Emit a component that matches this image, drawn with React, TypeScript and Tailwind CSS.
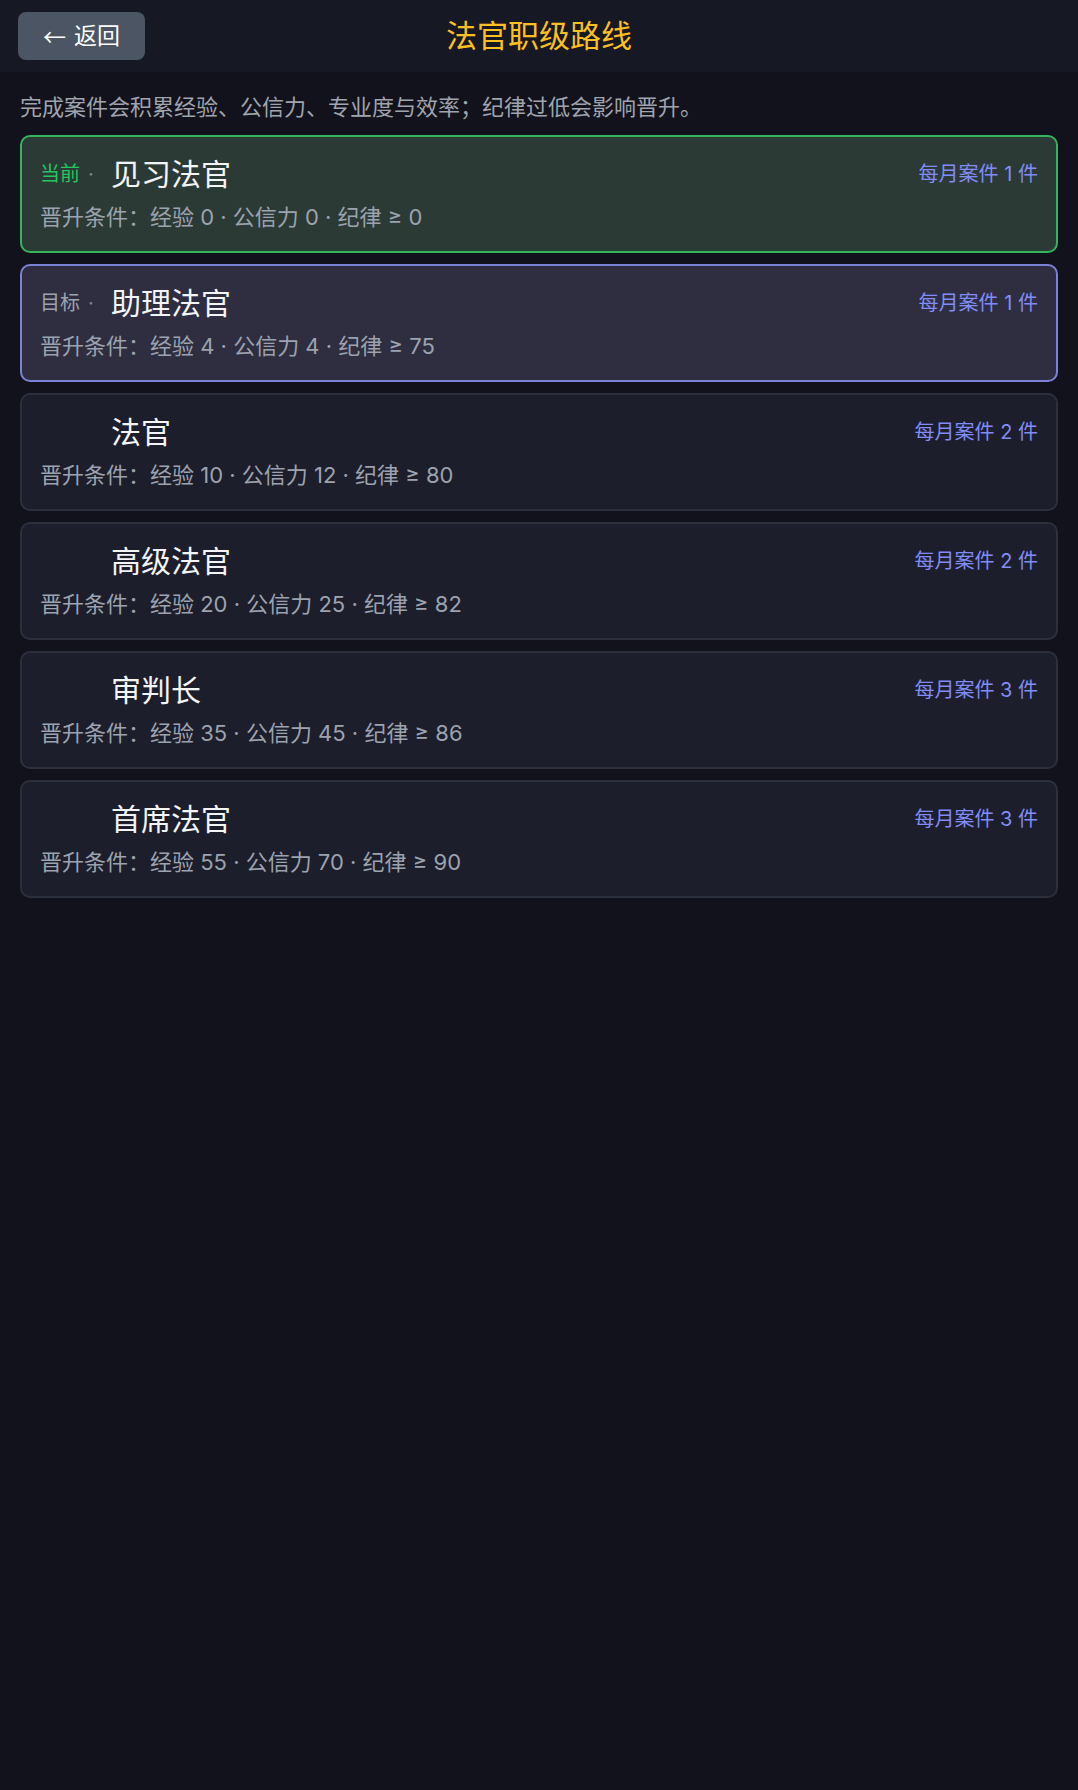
type Rank = {
  name: string
  exp: number
  trust: number
  discipline: number
  cases: number
  status?: 'current' | 'target'
}

const ranks: Rank[] = [
  { name: '见习法官', exp: 0, trust: 0, discipline: 0, cases: 1, status: 'current' },
  { name: '助理法官', exp: 4, trust: 4, discipline: 75, cases: 1, status: 'target' },
  { name: '法官', exp: 10, trust: 12, discipline: 80, cases: 2 },
  { name: '高级法官', exp: 20, trust: 25, discipline: 82, cases: 2 },
  { name: '审判长', exp: 35, trust: 45, discipline: 86, cases: 3 },
  { name: '首席法官', exp: 55, trust: 70, discipline: 90, cases: 3 },
]

function RankCard({ rank }: { rank: Rank }) {
  const tone =
    rank.status === 'current'
      ? 'border-[#35b45d] bg-[#2c3a36]'
      : rank.status === 'target'
        ? 'border-[#7c82d6] bg-[#2e2e40]'
        : 'border-[#2c2f3c] bg-[#1c1e2b]'

  return (
    <div className={`rounded-[10px] border-2 px-[18px] pt-[17px] pb-[19px] ${tone}`}>
      <div className="flex items-center justify-between">
        <div className="flex items-center">
          <span className="flex w-[71px] items-center text-[20px] leading-[40px]">
            {rank.status === 'current' ? (
              <span className="text-[#22c55e]">当前</span>
            ) : null}
            {rank.status === 'target' ? (
              <span className="text-[#9ca3af]">目标</span>
            ) : null}
            {rank.status ? <span className="ml-[8px] text-[#7d828c]">·</span> : null}
          </span>
          <span className="text-[30px] leading-[40px] text-[#f3f4f6]">{rank.name}</span>
        </div>
        <span className="text-[20px] leading-[40px] text-[#818cf8]">每月案件 {rank.cases} 件</span>
      </div>
      <p className="mt-[8px] text-[22px] leading-[30px] text-[#9ca3af]">
        晋升条件：经验 {rank.exp} · 公信力 {rank.trust} · 纪律 ≥ {rank.discipline}
      </p>
    </div>
  )
}

export default function App() {
  return (
    <div
      className="min-h-[1790px] bg-[#11121b]"
      style={{ fontFamily: 'Inter, "Noto Sans CJK SC", sans-serif' }}
    >
      <header className="grid h-[72px] grid-cols-[1fr_auto_1fr] items-center bg-[#161823] px-[18px]">
        <div>
          <button
            type="button"
            className="flex h-[48px] w-[127px] items-center justify-center gap-[8px] rounded-[8px] bg-[#4b5563] text-[23px] text-white"
          >
            <span style={{ fontFamily: '"Noto Sans CJK SC", sans-serif' }}>←</span>
            <span>返回</span>
          </button>
        </div>
        <h1 className="text-[31px] font-normal text-[#fbbf24]">法官职级路线</h1>
        <div />
      </header>

      <main className="px-5 pt-[20px]">
        <p className="text-[22px] leading-[30px] text-[#a0a4ad]">
          完成案件会积累经验、公信力、专业度与效率；纪律过低会影响晋升。
        </p>
        <div className="mt-[13px] flex flex-col gap-[11px]">
          {ranks.map((rank) => (
            <RankCard key={rank.name} rank={rank} />
          ))}
        </div>
      </main>
    </div>
  )
}
